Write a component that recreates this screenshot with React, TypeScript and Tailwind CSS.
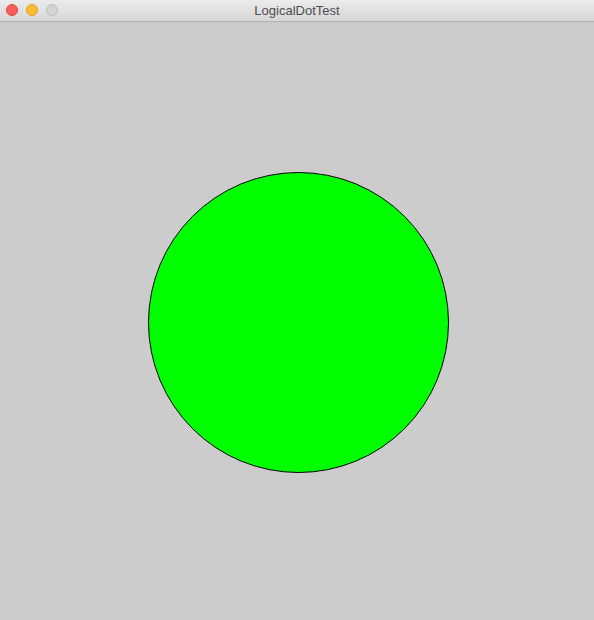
import React from "react";

export default function App() {
  return (
    <div className="w-[594px] h-[620px] flex flex-col bg-[#cccccc] overflow-hidden" style={{ fontFamily: '"Liberation Sans", Arial, sans-serif' }}>
      <div className="relative h-[22px] shrink-0 flex items-center justify-center bg-gradient-to-b from-[#ececec] to-[#d6d6d6] border-b border-[#b1b1b1]">
        <div className="absolute left-[6px] top-[4px] flex gap-[8px]">
          <span className="w-[12px] h-[12px] rounded-full bg-[#fc5f57] border border-[#e2463f]" />
          <span className="w-[12px] h-[12px] rounded-full bg-[#fdbc2e] border border-[#e0a028]" />
          <span className="w-[12px] h-[12px] rounded-full bg-[#d3d3d3] border border-[#c0c0c0]" />
        </div>
        <span className="text-[13px] text-[#4d4d4d] leading-none">LogicalDotTest</span>
      </div>
      <div className="flex-1 flex items-center justify-center pl-[2px] pt-[2px]">
        <div className="w-[301px] h-[301px] rounded-full bg-[#00ff00] border border-black" />
      </div>
    </div>
  );
}
